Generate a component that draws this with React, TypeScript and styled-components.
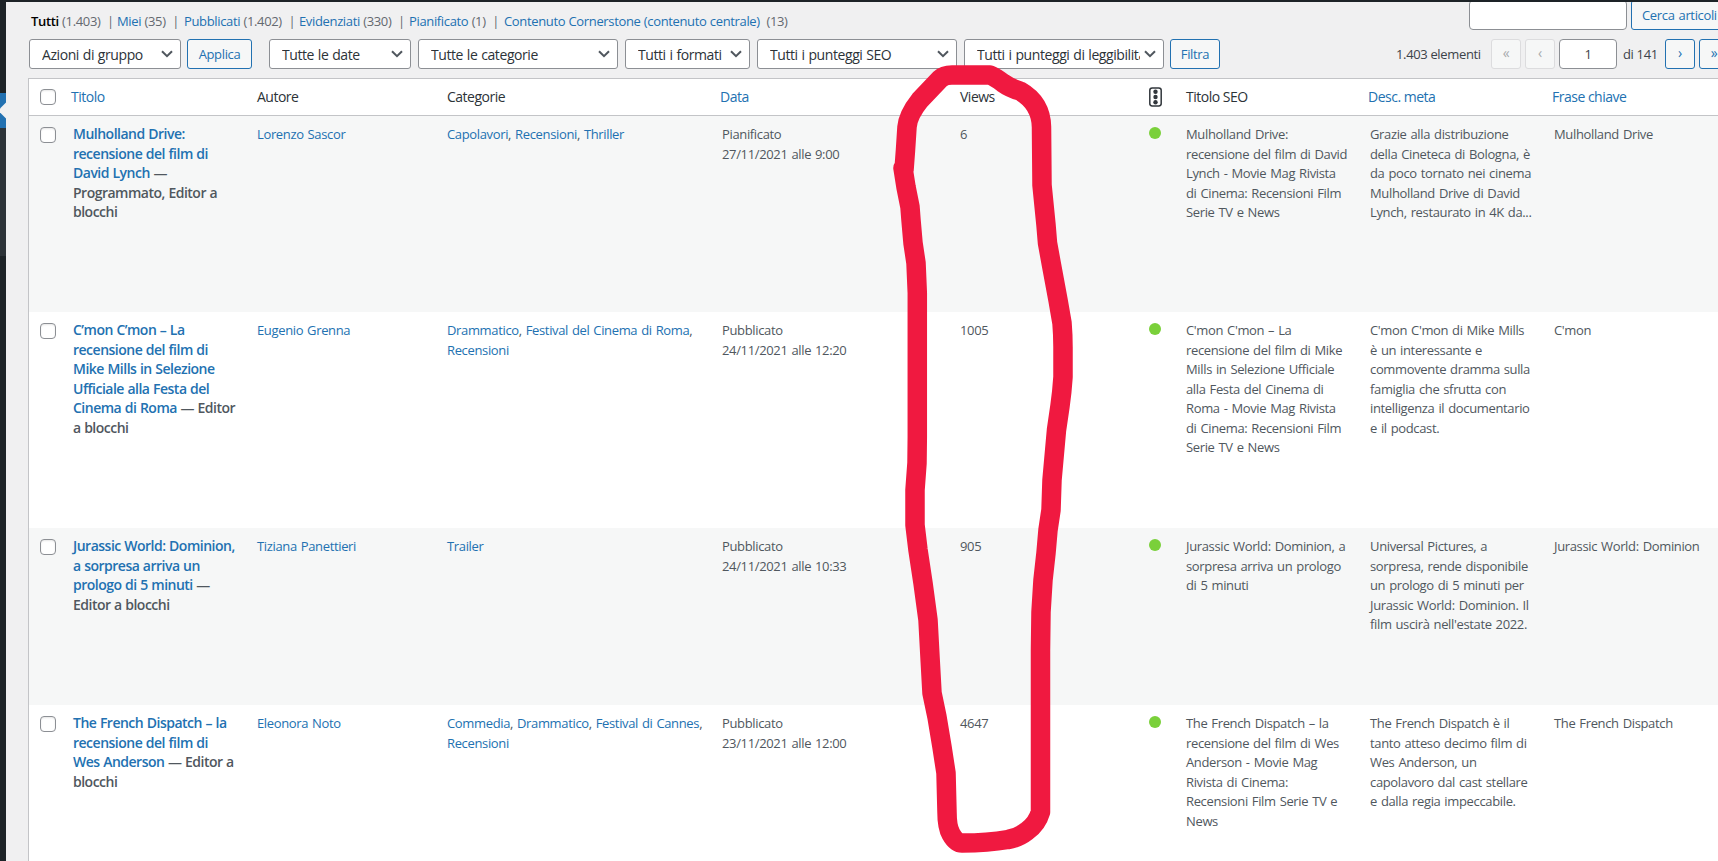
import React from "react";
import styled, { createGlobalStyle, css } from "styled-components";

const GlobalStyle = createGlobalStyle`
  * { box-sizing: border-box; }
  html, body { margin: 0; height: 861px; overflow: hidden; background: #f0f0f1; }
  body {
    font-family: "Open Sans", "Noto Sans", sans-serif;
    font-size: 13px;
    line-height: 19.5px;
    letter-spacing: -0.35px;
    color: #3c434a;
  }
`;

const Shell = styled.div`
  position: relative;
  display: flex;
  width: 1718px;
  height: 861px;
  overflow: hidden;
  border-top: 2px solid #1d2327;
`;

const MenuStrip = styled.div`
  display: flex;
  flex-direction: column;
  flex: 0 0 6px;
  background: #1d2327;
`;
const MenuCurrent = styled.div`
  height: 35px;
  margin-top: 91px;
  background: #2271b1;
  svg { display: block; }
`;
const MenuSub = styled.div`
  height: 128px;
  background: #2c3338;
`;

const Content = styled.main`
  flex: 0 0 auto;
  width: 1723px;
  padding-left: 22px;
`;

const TopLine = styled.div`
  display: flex;
  justify-content: space-between;
  height: 37px;
`;

const Views = styled.ul`
  display: flex;
  list-style: none;
  margin: 0;
  padding: 10px 0 0 3px;
  color: #646970;
  white-space: pre;
  word-spacing: 0.3px;
`;
const ViewItem = styled.li<{ $w: number }>`
  width: ${(p) => p.$w}px;
`;

const Link = styled.a`
  color: #2271b1;
  text-decoration: none;
`;
const Current = styled.b`
  color: #000;
  font-weight: 600;
`;

const SearchBox = styled.div`
  display: flex;
  gap: 4px;
  height: 28px;
  align-items: flex-end;
`;
const field = css`
  height: 30px;
  border: 1px solid #8c8f94;
  border-radius: 4px;
  background: #fff;
`;
const SearchField = styled.div`
  ${field}
  width: 158px;
`;

const Button = styled.div<{ $w: number; $ml?: number; $off?: boolean }>`
  display: flex;
  align-items: center;
  justify-content: center;
  flex: none;
  width: ${(p) => p.$w}px;
  height: 30px;
  margin-left: ${(p) => p.$ml ?? 0}px;
  padding-top: 1px;
  border: 1px solid ${(p) => (p.$off ? "#dcdcde" : "#2271b1")};
  border-radius: 3px;
  background: #f6f7f7;
  color: ${(p) => (p.$off ? "#a7aaad" : "#2271b1")};
`;
const SearchButton = styled(Button)`
  justify-content: flex-start;
  padding: 2px 0 0 10px;
  word-spacing: 1px;
`;

const Toolbar = styled.div`
  display: flex;
  height: 39px;
  align-items: flex-start;
  padding-left: 1px;
`;

const SelectBox = styled.div<{ $w: number; $ml?: number }>`
  ${field}
  display: flex;
  flex: none;
  align-items: center;
  justify-content: space-between;
  width: ${(p) => p.$w}px;
  margin-left: ${(p) => p.$ml ?? 7}px;
  padding: 0 7px 0 12px;
  border-radius: 3px;
  color: #2c3338;
  font-size: 14px;
  letter-spacing: -0.42px;
  word-spacing: 0.6px;
  span {
    flex: 1;
    margin-right: 4px;
    padding-top: 1px;
    overflow: hidden;
    white-space: nowrap;
  }
  svg { flex: none; }
`;

const Pager = styled.div`
  display: flex;
  align-items: center;
  margin-left: auto;
`;
const PagerText = styled.span<{ $w: number }>`
  width: ${(p) => p.$w}px;
  padding-top: 1px;
  white-space: nowrap;
`;
const PageField = styled.div`
  ${field}
  width: 58px;
  margin: 0 6px 0 4px;
  text-align: center;
  line-height: 29px;
`;
const Arrow = styled.span`
  font-size: 14px;
  line-height: 1;
  margin-top: -3px;
`;

const Table = styled.div`
  width: 1701px;
  height: 783px;
  background: #fff;
  border: 1px solid #c3c4c7;
`;
const Row = styled.div<{ $h: number; $striped?: boolean }>`
  display: grid;
  grid-template-columns: 34px 184px 190px 275px 238px 189px 37px 184px 184px 184px;
  height: ${(p) => p.$h}px;
  background: ${(p) => (p.$striped ? "#f6f7f7" : "#fff")};
`;
const HeadRow = styled(Row)`
  border-bottom: 1px solid #c3c4c7;
`;
const HeadCell = styled.div<{ $sort?: boolean }>`
  padding: 8px ${(p) => (p.$sort ? 8 : 10)}px;
  font-size: 14px;
  letter-spacing: -0.5px;
  color: ${(p) => (p.$sort ? "#2271b1" : "#2c3338")};
`;
const Cell = styled.div`
  padding: 9px 0 0 10px;
  color: #50575e;
  white-space: pre;
  word-spacing: 0.9px;
`;
const TitleCell = styled(Cell)`
  padding-top: 8px;
  font-size: 14px;
  font-weight: 600;
  letter-spacing: -0.5px;
  word-spacing: 0.4px;
`;
const Check = styled.div<{ $top: number }>`
  width: 16px;
  height: 16px;
  margin: ${(p) => p.$top}px 0 0 11px;
  border: 1px solid #8c8f94;
  border-radius: 4px;
  background: #fff;
  box-shadow: inset 0 1px 2px rgba(0, 0, 0, 0.1);
`;
const Dot = styled.div`
  width: 12px;
  height: 12px;
  margin: 11px 0 0 10px;
  border-radius: 50%;
  background: #7ad03a;
`;
const IconCell = styled.div`
  padding: 8px 0 0 10px;
  svg { display: block; }
`;

const Marker = styled.svg`
  position: absolute;
  left: 0;
  top: -2px;
`;

const Chevron = () => (
  <svg width="12" height="8" viewBox="0 0 12 8" fill="none" stroke="#50575e" strokeWidth="2">
    <path d="M1 1.2 6 6.2 11 1.2" />
  </svg>
);

const TrafficLight = () => (
  <svg width="13" height="20" viewBox="0 0 13 20">
    <rect x="0.8" y="0.9" width="11.4" height="18" rx="2.4" fill="#fff" stroke="#32373c" strokeWidth="1.5" />
    <circle cx="6.5" cy="4.8" r="2.2" fill="#32373c" />
    <circle cx="6.5" cy="10" r="2.2" fill="#32373c" />
    <circle cx="6.5" cy="15.2" r="2.2" fill="#32373c" />
  </svg>
);

const Select = ({ label, w, ml }: { label: string; w: number; ml?: number }) => (
  <SelectBox $w={w} $ml={ml}>
    <span>{label}</span>
    <Chevron />
  </SelectBox>
);

type Post = {
  height: number;
  /* one entry per line: linked title text, then the post state */
  title: [string, string?][];
  author: string;
  categories: string[][];
  date: string;
  views: string;
  seo: string;
  desc: string;
  key: string;
};

const posts: Post[] = [
  {
    height: 196,
    title: [
      ["Mulholland Drive:"],
      ["recensione del film di"],
      ["David Lynch", " —"],
      ["", "Programmato, Editor a"],
      ["", "blocchi"],
    ],
    author: "Lorenzo Sascor",
    categories: [["Capolavori", "Recensioni", "Thriller"]],
    date: "Pianificato\n27/11/2021 alle 9:00",
    views: "6",
    seo: "Mulholland Drive:\nrecensione del film di David\nLynch - Movie Mag Rivista\ndi Cinema: Recensioni Film\nSerie TV e News",
    desc: "Grazie alla distribuzione\ndella Cineteca di Bologna, è\nda poco tornato nei cinema\nMulholland Drive di David\nLynch, restaurato in 4K da...",
    key: "Mulholland Drive",
  },
  {
    height: 216,
    title: [
      ["C’mon C’mon – La"],
      ["recensione del film di"],
      ["Mike Mills in Selezione"],
      ["Ufficiale alla Festa del"],
      ["Cinema di Roma", " — Editor"],
      ["", "a blocchi"],
    ],
    author: "Eugenio Grenna",
    categories: [["Drammatico", "Festival del Cinema di Roma"], ["Recensioni"]],
    date: "Pubblicato\n24/11/2021 alle 12:20",
    views: "1005",
    seo: "C'mon C'mon – La\nrecensione del film di Mike\nMills in Selezione Ufficiale\nalla Festa del Cinema di\nRoma - Movie Mag Rivista\ndi Cinema: Recensioni Film\nSerie TV e News",
    desc: "C'mon C'mon di Mike Mills\nè un interessante e\ncommovente dramma sulla\nfamiglia che sfrutta con\nintelligenza il documentario\ne il podcast.",
    key: "C'mon",
  },
  {
    height: 177,
    title: [
      ["Jurassic World: Dominion,"],
      ["a sorpresa arriva un"],
      ["prologo di 5 minuti", " —"],
      ["", "Editor a blocchi"],
    ],
    author: "Tiziana Panettieri",
    categories: [["Trailer"]],
    date: "Pubblicato\n24/11/2021 alle 10:33",
    views: "905",
    seo: "Jurassic World: Dominion, a\nsorpresa arriva un prologo\ndi 5 minuti",
    desc: "Universal Pictures, a\nsorpresa, rende disponibile\nun prologo di 5 minuti per\nJurassic World: Dominion. Il\nfilm uscirà nell'estate 2022.",
    key: "Jurassic World: Dominion",
  },
  {
    height: 196,
    title: [
      ["The French Dispatch – la"],
      ["recensione del film di"],
      ["Wes Anderson", " — Editor a"],
      ["", "blocchi"],
    ],
    author: "Eleonora Noto",
    categories: [["Commedia", "Drammatico", "Festival di Cannes"], ["Recensioni"]],
    date: "Pubblicato\n23/11/2021 alle 12:00",
    views: "4647",
    seo: "The French Dispatch – la\nrecensione del film di Wes\nAnderson - Movie Mag\nRivista di Cinema:\nRecensioni Film Serie TV e\nNews",
    desc: "The French Dispatch è il\ntanto atteso decimo film di\nWes Anderson, un\ncapolavoro dal cast stellare\ne dalla regia impeccabile.",
    key: "The French Dispatch",
  },
];

const Categories = ({ lines }: { lines: string[][] }) => (
  <>
    {lines.map((line, i) => (
      <div key={i}>
        {line.map((c, j) => (
          <React.Fragment key={c}>
            <Link>{c}</Link>
            {(j < line.length - 1 || i < lines.length - 1) && ", "}
          </React.Fragment>
        ))}
      </div>
    ))}
  </>
);

const filters = [
  { label: "Miei", count: "(35)", w: 67 },
  { label: "Pubblicati", count: "(1.402)", w: 115 },
  { label: "Evidenziati", count: "(330)", w: 110 },
  { label: "Pianificato", count: "(1)", w: 95 },
];

export default function App() {
  return (
    <Shell>
      <GlobalStyle />
      <MenuStrip>
        <MenuCurrent>
          <svg width="6" height="35">
            <path d="M6 9.5 -2 17.5 6 25.5Z" fill="#f0f0f1" />
          </svg>
        </MenuCurrent>
        <MenuSub />
      </MenuStrip>
      <Content>
        <TopLine>
          <Views>
            <ViewItem $w={86}>
              <Current>Tutti</Current> (1.403)  |
            </ViewItem>
            {filters.map((f) => (
              <ViewItem key={f.label} $w={f.w}>
                <Link>{f.label}</Link> {f.count}  |
              </ViewItem>
            ))}
            <ViewItem $w={290}>
              <Link>Contenuto Cornerstone (contenuto centrale)</Link>  (13)
            </ViewItem>
          </Views>
          <SearchBox>
            <SearchField />
            <SearchButton $w={98}>Cerca articoli</SearchButton>
          </SearchBox>
        </TopLine>
        <Toolbar>
          <Select label="Azioni di gruppo" w={152} ml={0} />
          <Button $w={65} $ml={6}>Applica</Button>
          <Select label="Tutte le date" w={142} ml={17} />
          <Select label="Tutte le categorie" w={200} />
          <Select label="Tutti i formati" w={125} />
          <Select label="Tutti i punteggi SEO" w={200} />
          <Select label="Tutti i punteggi di leggibilità" w={200} />
          <Button $w={50} $ml={6}>Filtra</Button>
          <Pager>
            <PagerText $w={95}>1.403 elementi</PagerText>
            <Button $w={30} $off><Arrow>«</Arrow></Button>
            <Button $w={30} $ml={4} $off><Arrow>‹</Arrow></Button>
            <PageField>1</PageField>
            <PagerText $w={42}>di 141</PagerText>
            <Button $w={30}><Arrow>›</Arrow></Button>
            <Button $w={30} $ml={4}><Arrow>»</Arrow></Button>
          </Pager>
        </Toolbar>
        <Table>
          <HeadRow $h={37}>
            <Check $top={10} />
            <HeadCell $sort>Titolo</HeadCell>
            <HeadCell>Autore</HeadCell>
            <HeadCell>Categorie</HeadCell>
            <HeadCell $sort>Data</HeadCell>
            <HeadCell>Views</HeadCell>
            <IconCell><TrafficLight /></IconCell>
            <HeadCell>Titolo SEO</HeadCell>
            <HeadCell $sort>Desc. meta</HeadCell>
            <HeadCell $sort>Frase chiave</HeadCell>
          </HeadRow>
          {posts.map((p, i) => (
            <Row key={p.author} $h={p.height} $striped={i % 2 === 0}>
              <Check $top={11} />
              <TitleCell>
                {p.title.map(([text, state], n) => (
                  <div key={n}>
                    {text && <Link>{text}</Link>}
                    {state}
                  </div>
                ))}
              </TitleCell>
              <Cell><Link>{p.author}</Link></Cell>
              <Cell><Categories lines={p.categories} /></Cell>
              <Cell>{p.date}</Cell>
              <Cell>{p.views}</Cell>
              <Dot />
              <Cell>{p.seo}</Cell>
              <Cell>{p.desc}</Cell>
              <Cell>{p.key}</Cell>
            </Row>
          ))}
        </Table>
      </Content>
      <Marker width="1718" height="861" viewBox="0 0 1718 861" fill="none" stroke="#f01940" strokeWidth="19.5" strokeLinejoin="round" strokeLinecap="round">
        <path d="M904 170 L905.5 150 L907 127 Q908 115 920 100 L940 79 Q944 75 952 75 L990 75 Q995 77 1003 83 Q1010 88 1020 91 Q1041 103 1041.5 127 L1042 185 L1046 225 L1047.5 243 L1051.5 265 L1058 300 L1062 323 Q1063 335 1063 347 L1063 377 Q1062 392 1060 406 L1056.5 430 L1052 480 L1051 510 L1048 530 L1046 553 L1043 580 L1041 612 L1040.5 650 L1040.5 812 Q1037 824 1027 831 Q1018 838 1008 839.5 Q988 843 962 843 Q956 843 951 834 Q947 827 947 812 L946 773 L942 747 L937 717 L932 693 L930 657 L928 620 L923 583 L918 550 L915 525 L915 490 L917 463 L917.3 437 L917.3 293 L916 263 L913 243 L911 220 L910 207 L906 187 L903 168" />
      </Marker>
    </Shell>
  );
}
